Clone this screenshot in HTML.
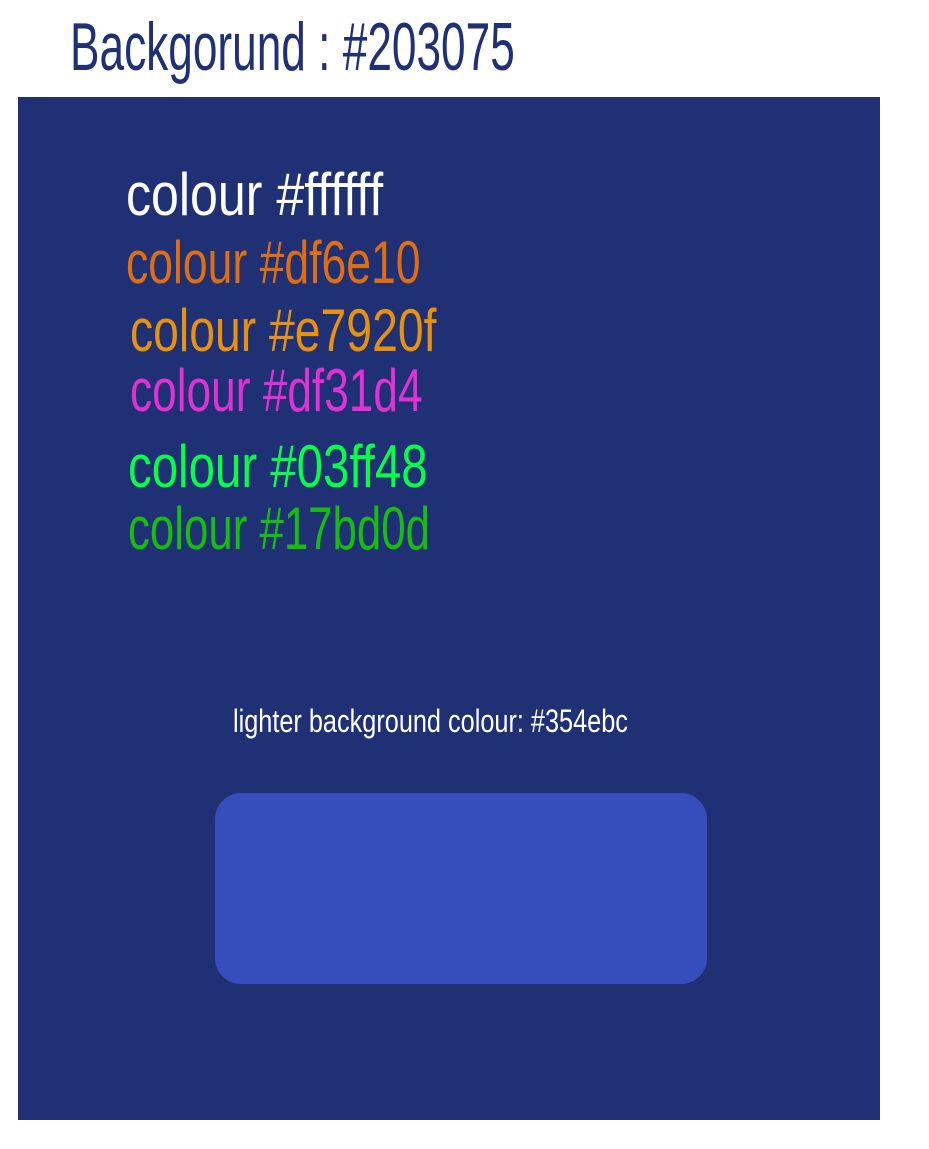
<!DOCTYPE html>
<html><head><meta charset="utf-8"><style>
html,body{margin:0;padding:0;background:#fff;width:929px;height:1149px;overflow:hidden;position:relative}
.t{position:absolute;font-family:"Liberation Sans Narrow","Liberation Sans",sans-serif;line-height:1;white-space:nowrap;transform-origin:0 0}
#box{position:absolute;left:18px;top:97px;width:862px;height:1023px;background:#203075}
#light{position:absolute;left:215px;top:793px;width:492px;height:191px;background:#354ebc;border-radius:26px}
.c{font-size:60px}
</style></head><body>
<div class="t" style="left:70px;top:13px;font-size:68px;color:#203075;transform:scaleX(0.65)">Backgorund : #203075</div>
<div id="box"></div>
<div class="t c" style="left:126px;top:165px;color:#ffffff;transform:scaleX(0.835)">colour #ffffff</div>
<div class="t c" style="left:126px;top:233px;color:#df6e10;transform:scaleX(0.742)">colour #df6e10</div>
<div class="t c" style="left:130px;top:301px;color:#e7920f;transform:scaleX(0.772)">colour #e7920f</div>
<div class="t c" style="left:130px;top:361px;color:#df31d4;transform:scaleX(0.737)">colour #df31d4</div>
<div class="t c" style="left:128px;top:437px;color:#03ff48;transform:scaleX(0.79)">colour #03ff48</div>
<div class="t c" style="left:128px;top:499px;color:#17bd0d;transform:scaleX(0.73)">colour #17bd0d</div>
<div class="t" style="left:233px;top:705px;font-size:32px;color:#fff;transform:scaleX(0.79)">lighter background colour: #354ebc</div>
<div id="light"></div>
</body></html>
